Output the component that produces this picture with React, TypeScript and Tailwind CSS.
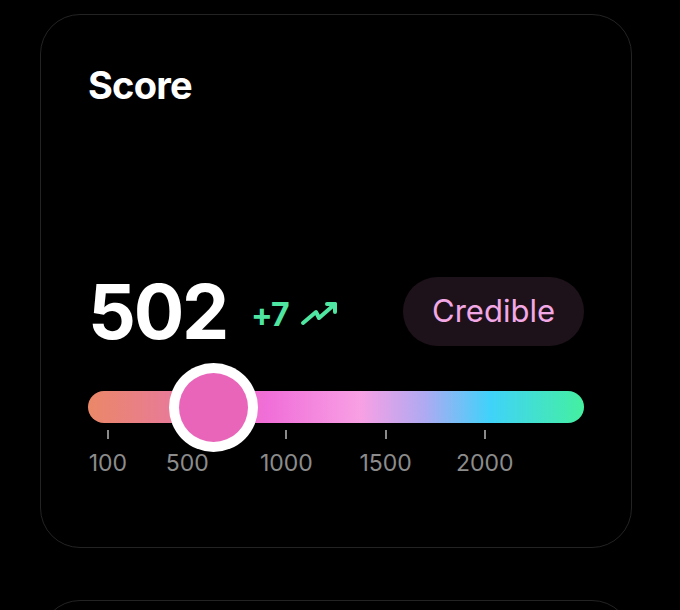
const ticks = [100, 500, 1000, 1500, 2000];
const MAX = 2500;
const BAR_W = 496;

function TrendIcon() {
  return (
    <svg width="40" height="28" viewBox="0 0 40 28" fill="none" stroke="currentColor" strokeWidth="4" strokeLinecap="round" strokeLinejoin="round">
      <polyline points="4,23 17,12 20,18 36,4" />
      <polyline points="28,4 36,4 36,12" />
    </svg>
  );
}

export default function App() {
  const pos = (v: number) => (v / MAX) * BAR_W;

  return (
    <div className="h-[610px] overflow-hidden bg-black pt-[14px] px-[40px] font-['Inter',sans-serif]">
      <div className="w-[592px] h-[534px] rounded-[40px] border border-[#232323] px-[47px] pt-[51px]">
        <h1 className="text-[38px] leading-none font-bold text-white tracking-[-0.02em]">Score</h1>

        <div className="mt-[170px] flex items-center justify-between">
          <div className="flex items-center">
            <span className="text-[75px] leading-none font-bold text-white tracking-[-0.03em]">502</span>
            <span className="ml-[24px] mt-[6px] text-[32px] font-bold text-[#4ee6a0] tracking-tight">+7</span>
            <span className="ml-[10px] mt-[4px] text-[#4ee6a0]">
              <TrendIcon />
            </span>
          </div>
          <div className="h-[69px] px-[29px] rounded-full bg-[#1e121a] flex items-center">
            <span className="text-[31px] text-[#f2a8e4]">Credible</span>
          </div>
        </div>

        <div className="mt-[42px] relative h-[32px] rounded-full bg-[linear-gradient(90deg,#ea8868_0%,#e878a0_20%,#f06ed8_36%,#f8a0e4_55%,#aeaaf2_68%,#40d2fa_81%,#44f0a0_100%)]">
          {ticks.map((t) => (
            <div key={t} className="absolute top-[39px] w-[2px] h-[9px] bg-[#8a8a8a]" style={{ left: pos(t) - 1 }} />
          ))}
          {ticks.map((t) => (
            <span
              key={"l" + t}
              className="absolute top-[61px] -translate-x-1/2 text-[23px] leading-none text-[#8c8c8c]"
              style={{ left: pos(t) }}
            >
              {t}
            </span>
          ))}
          <div className="absolute left-[81px] top-[-28px] w-[89px] h-[89px] rounded-full bg-white flex items-center justify-center">
            <div className="w-[69px] h-[69px] rounded-full bg-[#e965ba]" />
          </div>
        </div>
      </div>
      <div className="mt-[52px] w-[592px] h-[200px] rounded-[40px] border border-[#232323]" />
    </div>
  );
}
